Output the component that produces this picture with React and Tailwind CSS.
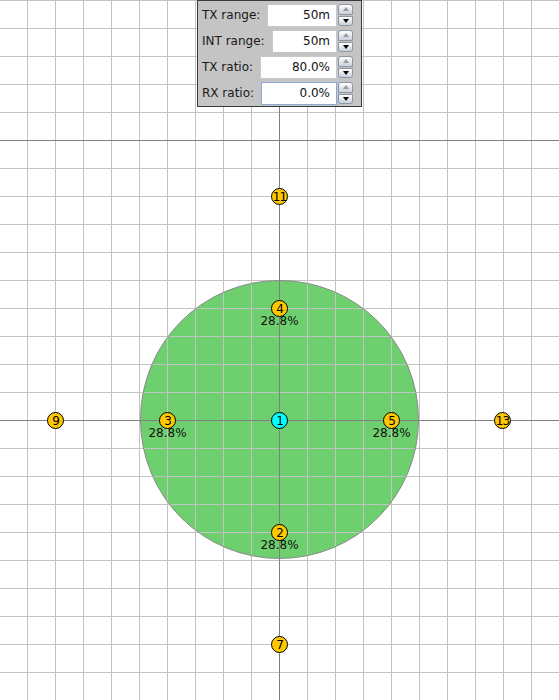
import React from "react";

const W = 559;
const H = 700;

function Grid() {
  const vx = [];
  for (let x = 27 - 28; x < W; x += 28) vx.push(x);
  const hy = [];
  for (let y = 0; y < H; y += 28) hy.push(y);
  return (
    <svg width={W} height={H} className="absolute left-0 top-0" shapeRendering="crispEdges">
      <rect x="0" y="0" width={W} height={H} fill="#ffffff" />
      <circle cx="279.5" cy="419.5" r="139" fill="#6dcf6d" shapeRendering="geometricPrecision" />
      {vx.map((x) => (
        <line key={"v" + x} x1={x + 0.5} y1="0" x2={x + 0.5} y2={H} stroke="#c3c3c3" strokeWidth="1" />
      ))}
      {hy.map((y) => (
        <line key={"h" + y} x1="0" y1={y + 0.5} x2={W} y2={y + 0.5} stroke="#c3c3c3" strokeWidth="1" />
      ))}
      <line x1="279.5" y1="0" x2="279.5" y2={H} stroke="#808080" strokeWidth="1" />
      <line x1="0" y1="140.5" x2={W} y2="140.5" stroke="#808080" strokeWidth="1" />
      <line x1="0" y1="420.5" x2={W} y2="420.5" stroke="#808080" strokeWidth="1" />
      <circle cx="279.5" cy="419.5" r="139" fill="none" stroke="#8a8a8a" strokeWidth="1" shapeRendering="geometricPrecision" />
    </svg>
  );
}

const nodes = [
  { id: "1", x: 279, y: 420, cyan: true },
  { id: "11", x: 279, y: 196 },
  { id: "4", x: 279, y: 308, label: true },
  { id: "2", x: 279, y: 532, label: true },
  { id: "7", x: 279, y: 644 },
  { id: "3", x: 167, y: 420, label: true },
  { id: "5", x: 391, y: 420, label: true },
  { id: "9", x: 55, y: 420 },
  { id: "13", x: 502, y: 420 },
];

function Node({ n }) {
  return (
    <>
      <div
        className={
          "absolute flex h-[17px] w-[17px] items-center justify-center rounded-full border border-black text-[12px] leading-none text-black " +
          (n.cyan ? "bg-[#00ffff]" : "bg-[#ffc800]")
        }
        style={{ left: n.x - 8, top: n.y - 8, fontFamily: '"DejaVu Sans", sans-serif' }}
      >
        <span className="tracking-[-1px]">{n.id}</span>
      </div>
      {n.label && (
        <div
          className="absolute w-[60px] text-center text-[12px] leading-[14px] text-[#111]"
          style={{ left: n.x - 30 + 0.5, top: n.y + 6, fontFamily: '"DejaVu Sans", sans-serif' }}
        >
          28.8%
        </div>
      )}
    </>
  );
}

function Spinner() {
  return (
    <div className="ml-[1px] flex h-[22px] w-[15px] flex-col gap-[1px]">
      <div className="flex h-[11px] items-center justify-center rounded-t-[3px] border border-[#8c96a3] bg-gradient-to-b from-[#ffffff] to-[#c9d1db]">
        <div className="h-0 w-0 border-x-[3px] border-b-[4px] border-x-transparent border-b-[#9a9a9a]" />
      </div>
      <div className="flex h-[11px] items-center justify-center rounded-b-[3px] border border-[#8c96a3] bg-gradient-to-b from-[#ffffff] to-[#c9d1db]">
        <div className="h-0 w-0 border-x-[3px] border-t-[4px] border-x-transparent border-t-[#000000]" />
      </div>
    </div>
  );
}

function Row({ label, value, focused }) {
  return (
    <div className="flex h-[26px] items-center">
      <div className="pl-[3px] pr-[7px] text-[12px] text-[#1a1a1a]">{label}</div>
      <div
        className={
          "flex h-[23px] flex-1 items-center justify-end bg-white pr-[6px] text-[12px] text-[#111] " +
          (focused ? "border border-[#8aa9d3]" : "border border-[#c8c8c8]")
        }
      >
        {value}
      </div>
      <Spinner />
    </div>
  );
}

function Panel() {
  return (
    <div
      className="absolute left-[197px] top-0 flex h-[107px] w-[165px] flex-col border border-[#3a3a3a] bg-[#c4c4c4] pl-[1px] pr-[8px] pt-[1px]"
      style={{ fontFamily: '"DejaVu Sans", sans-serif' }}
    >
      <Row label="TX range:" value="50m" />
      <Row label="INT range:" value="50m" />
      <Row label="TX ratio:" value="80.0%" />
      <Row label="RX ratio:" value="0.0%" focused />
    </div>
  );
}

export default function App() {
  return (
    <div className="relative h-[700px] w-[559px] overflow-hidden bg-white">
      <Grid />
      {nodes.map((n) => (
        <Node key={n.id} n={n} />
      ))}
      <Panel />
    </div>
  );
}
